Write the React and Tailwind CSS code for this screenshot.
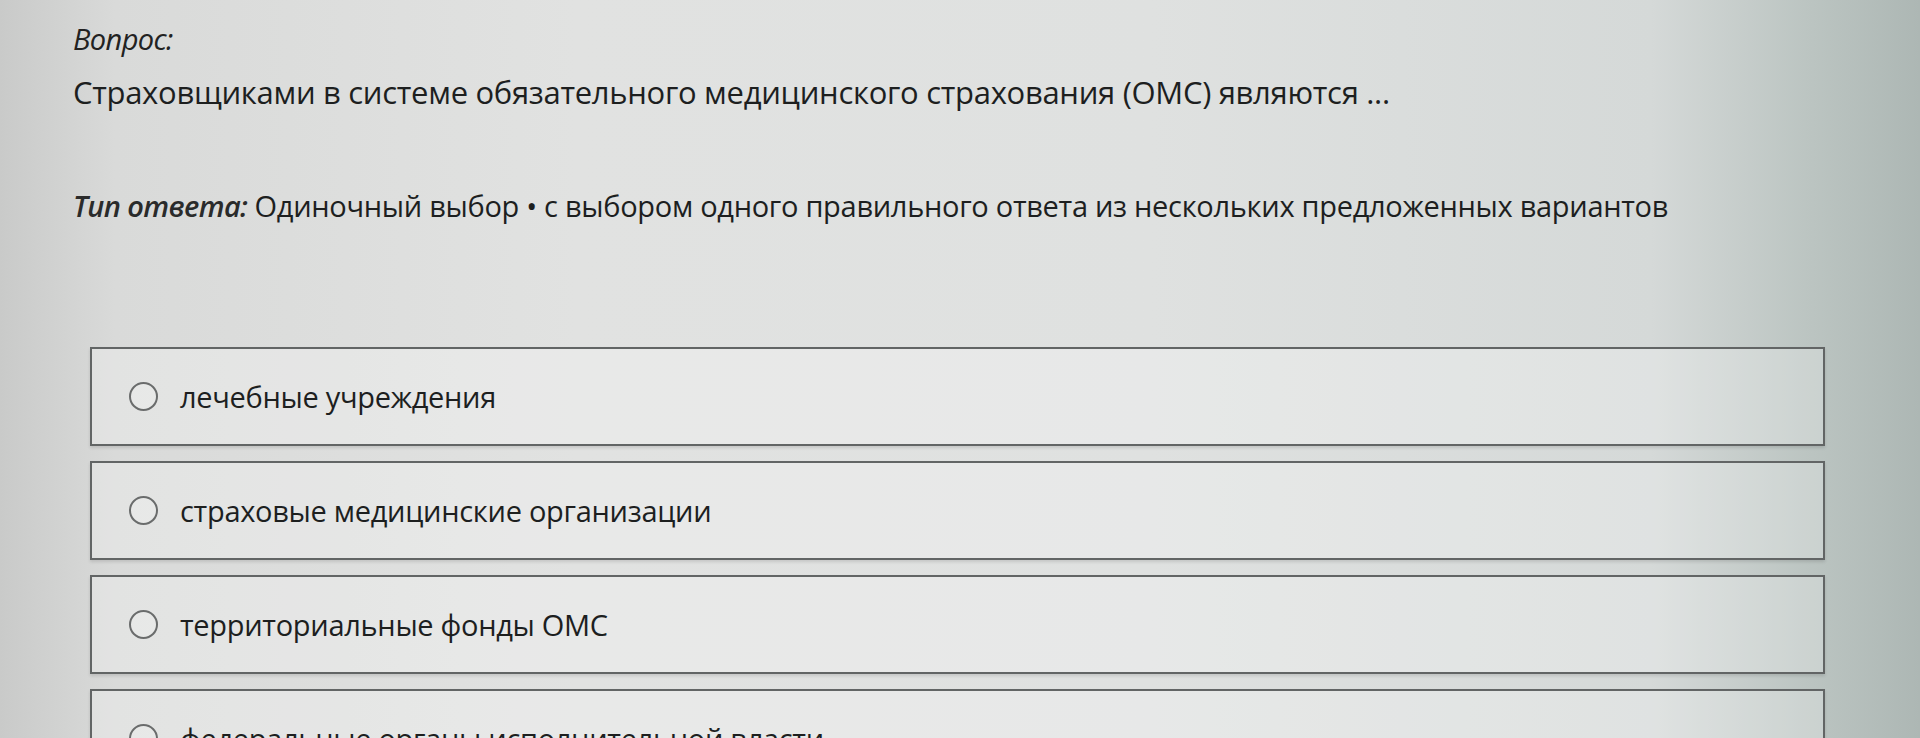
export default function App() {
  const options = [
    'лечебные учреждения',
    'страховые медицинские организации',
    'территориальные фонды ОМС',
    'федеральные органы исполнительной власти',
  ]

  return (
    <div
      className="h-[738px] w-[1920px] overflow-hidden bg-[linear-gradient(90deg,#c9cac9_0%,#d9dad9_6%,#e1e2e1_30%,#dfe1e0_60%,#d5d9d8_86%,#bcc5c2_94%,#adb7b4_100%)] text-[#1d1f1f]"
      style={{ fontFamily: '"Open Sans", "Noto Sans", sans-serif' }}
    >
      <div className="pl-[73px] pt-[19px]">
        <div className="h-[40px] text-[29px] italic leading-[40px] tracking-[-0.6px] text-[#222]">Вопрос:</div>
        <div className="mt-[13px] h-[40px] text-[31px] leading-[40px] tracking-[-0.3px]">
          Страховщиками в системе обязательного медицинского страхования (ОМС) являются ...
        </div>
        <div className="mt-[74px] h-[40px] text-[29px] leading-[40px] tracking-[-0.3px]">
          <span className="font-semibold italic tracking-[-0.6px] text-[#2a2b2b]">Тип ответа:</span> Одиночный выбор • с выбором одного правильного ответа из нескольких предложенных вариантов
        </div>
      </div>

      <div className="mt-[121px] flex w-[1825px] flex-col gap-[15px] pl-[90px]">
        {options.map((opt) => (
          <div
            key={opt}
            className="flex h-[99px] shrink-0 items-center border-2 border-[#626565] bg-white/25 pl-[37px] shadow-[0_2px_3px_rgba(0,0,0,0.12)]"
          >
            <span className="h-[29px] w-[29px] shrink-0 rounded-full border-2 border-[#6a6c6c] bg-white/20" />
            <span className="ml-[22px] text-[29px] leading-[40px] tracking-[-0.3px]">{opt}</span>
          </div>
        ))}
      </div>
    </div>
  )
}
